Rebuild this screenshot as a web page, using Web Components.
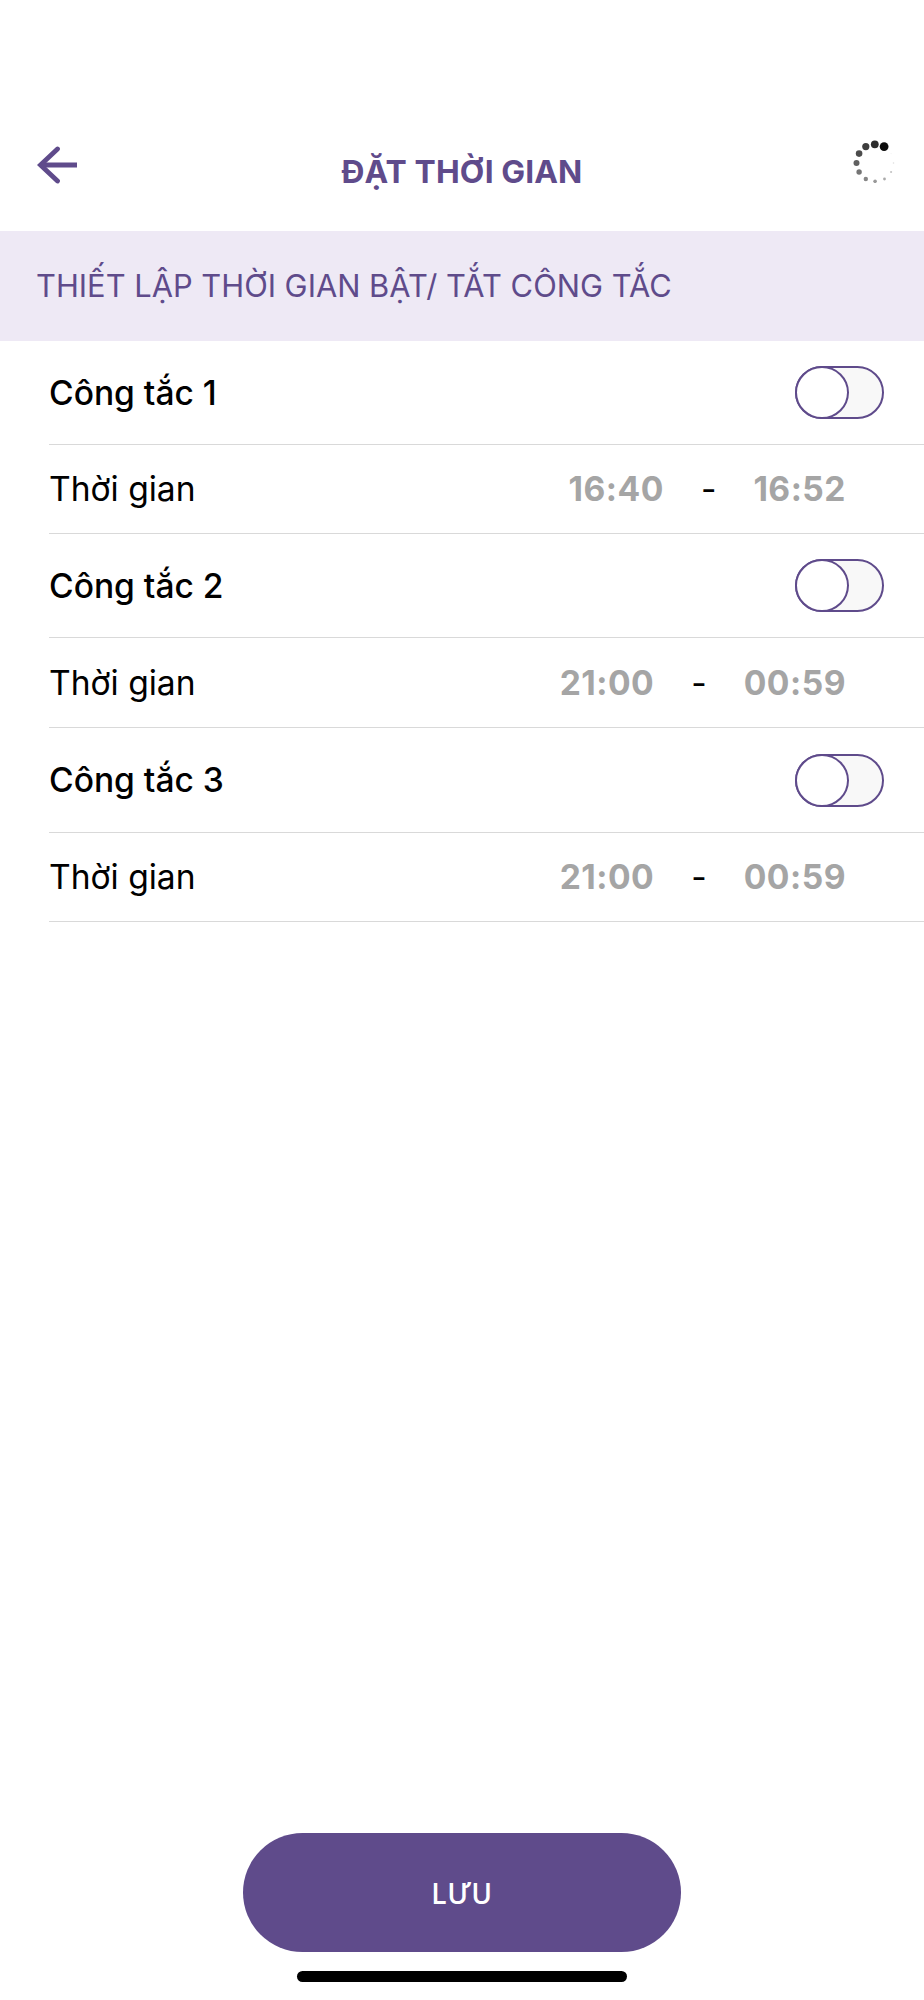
<!DOCTYPE html>
<html lang="vi"><head><meta charset="utf-8"><title>Đặt thời gian</title>
<style>
html,body{margin:0;padding:0;background:#fff}
body{font-family:Inter,"Liberation Sans",sans-serif}
</style></head><body>
<timer-app>
  <app-header slot="header" heading="ĐẶT THỜI GIAN"></app-header>
  <section-banner slot="banner">THIẾT LẬP THỜI GIAN BẬT/ TẮT CÔNG TẮC</section-banner>
  <switch-row label="Công tắc 1" style="--h:104px"></switch-row>
  <time-row start="16:40" end="16:52" style="--h:89px"></time-row>
  <switch-row label="Công tắc 2" style="--h:104px"></switch-row>
  <time-row start="21:00" end="00:59" style="--h:90px"></time-row>
  <switch-row label="Công tắc 3" style="--h:105px"></switch-row>
  <time-row start="21:00" end="00:59" style="--h:89px"></time-row>
  <save-button slot="footer">LƯU</save-button>
</timer-app>
<script>
const def=(name,html)=>customElements.define(name,class extends HTMLElement{
  connectedCallback(){
    if(this.shadowRoot)return;
    const r=this.attachShadow({mode:'open'});
    r.innerHTML=typeof html==='function'?html(this):html;
  }
});
def('timer-app',`<style>
:host{display:flex;flex-direction:column;width:924px;height:2000px;overflow:hidden;background:#fff}
.list{display:flex;flex-direction:column;flex:1}
</style><slot name="header"></slot><slot name="banner"></slot><div class="list"><slot></slot></div><slot name="footer"></slot>`);
const dots=[[181,82,4.4,'#0c0c0c'],[153,75,3.9,'#2c2c2c'],[126,82,3.6,'#3e3e3e'],[106,103,3.3,'#4c4c4c'],[98,131,3,'#606060'],[106,158,2.7,'#757575'],[126,179,2.2,'#868686'],[154,186,1.8,'#999'],[182,179,1.4,'#aaa'],[202,158,1.1,'#c4c4c4'],[209,131,.8,'#ddd'],[202,103,.6,'#f2f2f2']];
def('app-header',h=>`<style>
:host{display:block;height:231px;box-sizing:border-box;padding-top:146px}
.bar{display:grid;grid-template-columns:1fr auto 1fr;align-items:start}
h1{margin:5px 0 0;font:700 31.8px/42px Inter,sans-serif;color:#5f4b8b;letter-spacing:.1px;white-space:nowrap}
.back{width:40px;height:38px;display:block;margin-left:37px}
.spin{width:50px;height:50px;display:block;justify-self:end;margin:-13px 24px 0 0}
</style><div class="bar"><svg class="back" viewBox="0 0 40 38" fill="none" stroke="#5f4b8b" stroke-width="4.8" stroke-linecap="round" stroke-linejoin="miter"><path d="M20.5 3 3.5 19l17 16"/><path d="M4 19h36" stroke-linecap="butt"/></svg><h1>${h.getAttribute('heading')}</h1><svg class="spin" viewBox="0 0 50 50">${dots.map(d=>`<circle cx="${(d[0]/3-26.2).toFixed(1)}" cy="${(d[1]/3-13.7).toFixed(1)}" r="${d[2]}" fill="${d[3]}"/>`).join('')}</svg></div>`);
def('section-banner',`<style>
:host{display:flex;align-items:center;height:110px;box-sizing:border-box;padding:0 0 0 36px;background:#eee9f5;color:#5f4b8b;font:400 30.85px/40px Inter,sans-serif;white-space:nowrap}
</style><slot></slot>`);
def('switch-row',h=>`<style>
:host{display:flex;align-items:center;justify-content:space-between;height:var(--h);box-sizing:border-box;margin-left:49px;padding:0 40px 0 0;border-bottom:1px solid #d9d9d9;font:500 33.6px/40px Inter,sans-serif;color:#000}
</style><span>${h.getAttribute('label')}</span><toggle-switch></toggle-switch>`);
def('toggle-switch',`<style>
:host{display:block;position:relative;width:89px;height:53px;box-sizing:border-box;border:2px solid #5f4b8b;border-radius:27px;background:#f8f8f8}
i{position:absolute;left:-2px;top:-2px;width:54px;height:53px;box-sizing:border-box;border:2px solid #5f4b8b;border-radius:50%;background:#fff}
</style><i></i>`);
def('time-row',h=>`<style>
:host{display:flex;align-items:center;justify-content:space-between;height:var(--h);box-sizing:border-box;margin-left:49px;padding:0 78px 0 0;border-bottom:1px solid #d9d9d9;font:400 33.6px/40px Inter,sans-serif;color:#000}
.t{display:flex;align-items:center;gap:37px}
b{font-weight:700;color:#a5a5a5;letter-spacing:.5px}
</style><span>Thời gian</span><span class="t"><b>${h.getAttribute('start')}</b><span>-</span><b>${h.getAttribute('end')}</b></span>`);
def('save-button',`<style>
:host{display:flex;flex-direction:column;align-items:center}
.b{width:438px;height:119px;border-radius:60px;background:#5f4b8b;color:#fff;display:flex;align-items:center;justify-content:center;font:600 28px/36px "Open Sans",sans-serif;letter-spacing:.8px}
.h{width:330px;height:11px;border-radius:6px;background:#000;margin:19px 0 18px}
</style><div class="b"><slot></slot></div><div class="h"></div>`);
</script>
</body></html>
